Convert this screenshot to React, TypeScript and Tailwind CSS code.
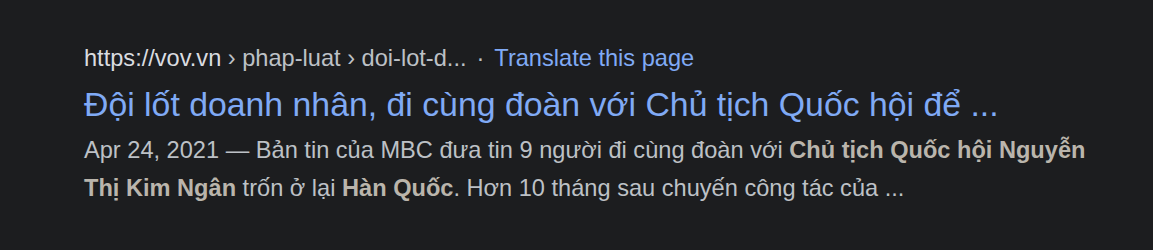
export default function App() {
  return (
    <div
      className="w-[1153px] h-[250px] bg-[#1c1d1f] pl-[84px] pt-[40px]"
      style={{ fontFamily: '"Liberation Sans", Arial, sans-serif' }}
    >
      <div className="flex items-center h-[36px] text-[23.6px] leading-[36px] whitespace-nowrap">
        <span className="text-[#dadce0]">https://vov.vn</span>
        <span className="text-[#bdc1c6]">&nbsp;› phap-luat › doi-lot-d...</span>
        <span className="text-[#bdc1c6] px-[10px]">·</span>
        <span className="text-[#80aaf5]">Translate this page</span>
      </div>
      <div className="text-[33.8px] leading-[44px] mt-[6px] text-[#80aaf5] whitespace-nowrap">
        Đội lốt doanh nhân, đi cùng đoàn với Chủ tịch Quốc hội để ...
      </div>
      <div className="text-[23.6px] leading-[38px] mt-[5px] text-[#bdc1c6] whitespace-nowrap">
        <div>
          Apr 24, 2021 — Bản tin của MBC đưa tin 9 người đi cùng đoàn với{" "}
          <b className="font-bold text-[#bab5ac]">Chủ tịch Quốc hội Nguyễn</b>
        </div>
        <div>
          <b className="font-bold text-[#bab5ac]">Thị Kim Ngân</b> trốn ở lại{" "}
          <b className="font-bold text-[#bab5ac]">Hàn Quốc</b>. Hơn 10 tháng sau chuyến công tác của ...
        </div>
      </div>
    </div>
  );
}
